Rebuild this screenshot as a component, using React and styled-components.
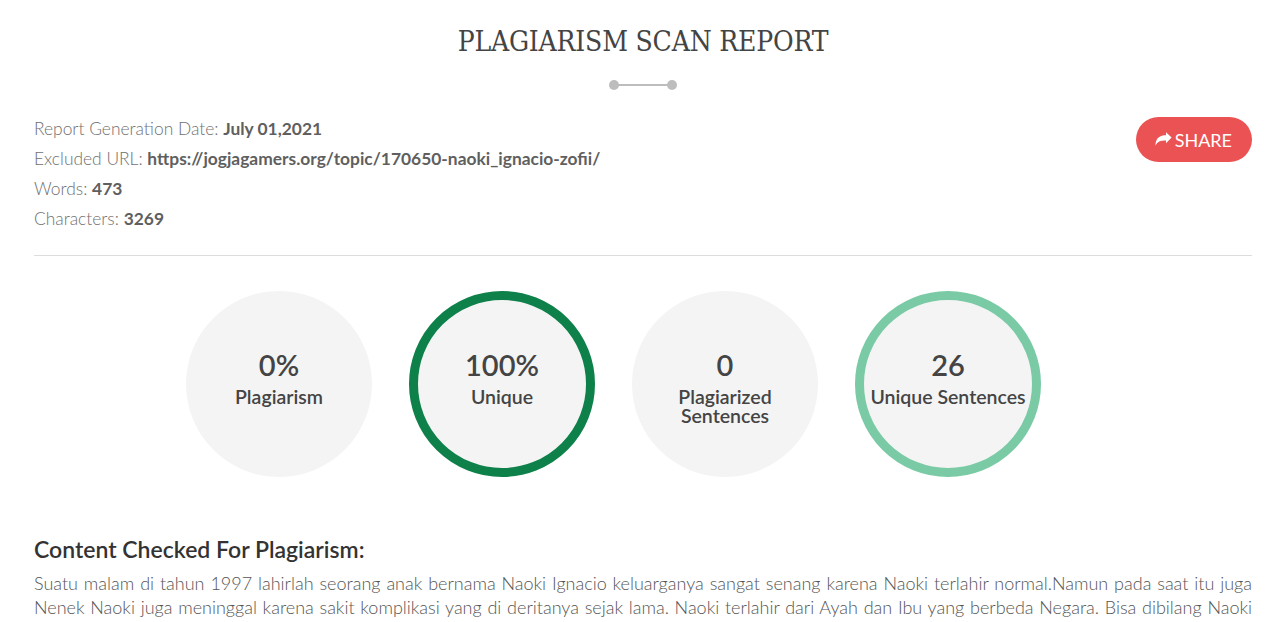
import { createGlobalStyle, styled } from "styled-components";

const GlobalStyle = createGlobalStyle`
  * { box-sizing: border-box; }
  body {
    margin: 0;
    background: #fff;
    font-family: Lato, "Noto Sans", sans-serif;
    color: #666;
  }
`;

const info = [
  { id: 1, label: "Report Generation Date:", value: "July 01,2021" },
  {
    id: 2,
    label: "Excluded URL:",
    value: "https://jogjagamers.org/topic/170650-naoki_ignacio-zofii/",
  },
  { id: 3, label: "Words:", value: "473" },
  { id: 4, label: "Characters:", value: "3269" },
];

const stats = [
  { id: 1, value: "0%", label: "Plagiarism", ring: null },
  { id: 2, value: "100%", label: "Unique", ring: "#0e804a" },
  { id: 3, value: "0", label: "Plagiarized Sentences", ring: null, narrow: true },
  { id: 4, value: "26", label: "Unique Sentences", ring: "#7acba5" },
];

const content =
  "Suatu malam di tahun 1997 lahirlah seorang anak bernama Naoki Ignacio keluarganya sangat senang karena Naoki terlahir normal.Namun pada saat itu juga Nenek Naoki juga meninggal karena sakit komplikasi yang di deritanya sejak lama. Naoki terlahir dari Ayah dan Ibu yang berbeda Negara. Bisa dibilang Naoki adalah anak campuran karena ayahnya berasal dari Jepang dan ibunya berasal dari Spanyol, sejak kecil Naoki tinggal bersama kedua orang tuanya di kota kecil.";

const ShareIcon = () => (
  <svg width="17" height="15" viewBox="0 0 17 15" aria-hidden="true">
    <path
      d="M16.6 5.6 L11 0.3 V3.3 C5.2 3.3 0.6 5.6 0.4 13.8 C2.2 9.6 5.4 8.4 11 8.4 V11.3 Z"
      fill="#fff"
    />
  </svg>
);

const App = () => {
  return (
    <Page>
      <GlobalStyle />
      <Title>PLAGIARISM SCAN REPORT</Title>
      <Divider>
        <span />
      </Divider>
      <Meta>
        <InfoList>
          {info.map(({ id, label, value }) => (
            <li key={id}>
              {label} <b>{value}</b>
            </li>
          ))}
        </InfoList>
        <ShareButton>
          <ShareIcon />
          SHARE
        </ShareButton>
      </Meta>
      <Rule />
      <Stats>
        {stats.map(({ id, value, label, ring, narrow }) => (
          <Circle key={id} $ring={ring}>
            <Value>{value}</Value>
            <Label $narrow={narrow}>{label}</Label>
          </Circle>
        ))}
      </Stats>
      <Heading>Content Checked For Plagiarism:</Heading>
      <Body>{content}</Body>
    </Page>
  );
};

const Page = styled.main`
  padding: 0 28px 0 34px;
`;

const Title = styled.h1`
  margin: 0;
  padding-top: 27px;
  text-align: center;
  font-family: "DejaVu Serif", "Liberation Serif", serif;
  font-stretch: condensed;
  font-weight: 400;
  font-size: 28px;
  line-height: 30px;
  letter-spacing: -0.2px;
  color: #444;
`;

const Divider = styled.div`
  display: flex;
  justify-content: center;
  margin-top: 27px;
  span {
    position: relative;
    width: 66px;
    height: 2px;
    background: #bdbdbd;
    &::before,
    &::after {
      content: "";
      position: absolute;
      top: -4px;
      width: 10px;
      height: 10px;
      border-radius: 50%;
      background: #bdbdbd;
    }
    &::before { left: -1px; }
    &::after { right: -1px; }
  }
`;

const Meta = styled.section`
  display: flex;
  justify-content: space-between;
  align-items: flex-start;
  margin-top: 28px;
`;

const InfoList = styled.ul`
  list-style: none;
  margin: 0;
  padding: 0;
  li {
    font-size: 17.4px;
    font-weight: 300;
    line-height: 30px;
    color: #707070;
  }
  b {
    font-weight: 700;
    color: #5f5f5f;
  }
`;

const ShareButton = styled.button`
  display: flex;
  align-items: center;
  gap: 3px;
  margin-top: 3px;
  height: 45px;
  padding: 0 20px 0 19px;
  border: none;
  border-radius: 23px;
  background: #eb5253;
  color: #fff;
  font-family: Lato, sans-serif;
  font-size: 18px;
  cursor: pointer;
`;

const Rule = styled.hr`
  margin: 21px 0 0;
  border: none;
  border-top: 1px solid #ddd;
`;

const Stats = styled.section`
  display: flex;
  gap: 37px;
  margin: 35px 0 0 152px;
`;

const Circle = styled.div`
  display: flex;
  flex-direction: column;
  align-items: center;
  justify-content: center;
  width: 186px;
  height: 186px;
  border-radius: 50%;
  background: #f4f4f4;
  border: ${({ $ring }) => ($ring ? `9px solid ${$ring}` : "none")};
  color: #444;
  text-align: center;
`;

const Value = styled.div`
  font-size: 29px;
  font-weight: 600;
  line-height: 34px;
  margin-top: -14px;
`;

const Label = styled.div`
  font-size: 19.5px;
  font-weight: 600;
  line-height: 19px;
  margin-top: 5px;
  max-width: ${({ $narrow }) => ($narrow ? "120px" : "none")};
  margin-bottom: ${({ $narrow }) => ($narrow ? "-19px" : "0")};
`;

const Heading = styled.h2`
  margin: 58px 0 0;
  font-size: 23px;
  font-weight: 600;
  line-height: 28px;
  color: #333;
`;

const Body = styled.p`
  margin: 8px 0 0;
  font-size: 18px;
  font-weight: 300;
  line-height: 24px;
  text-align: justify;
  color: #555;
`;

export default App;
